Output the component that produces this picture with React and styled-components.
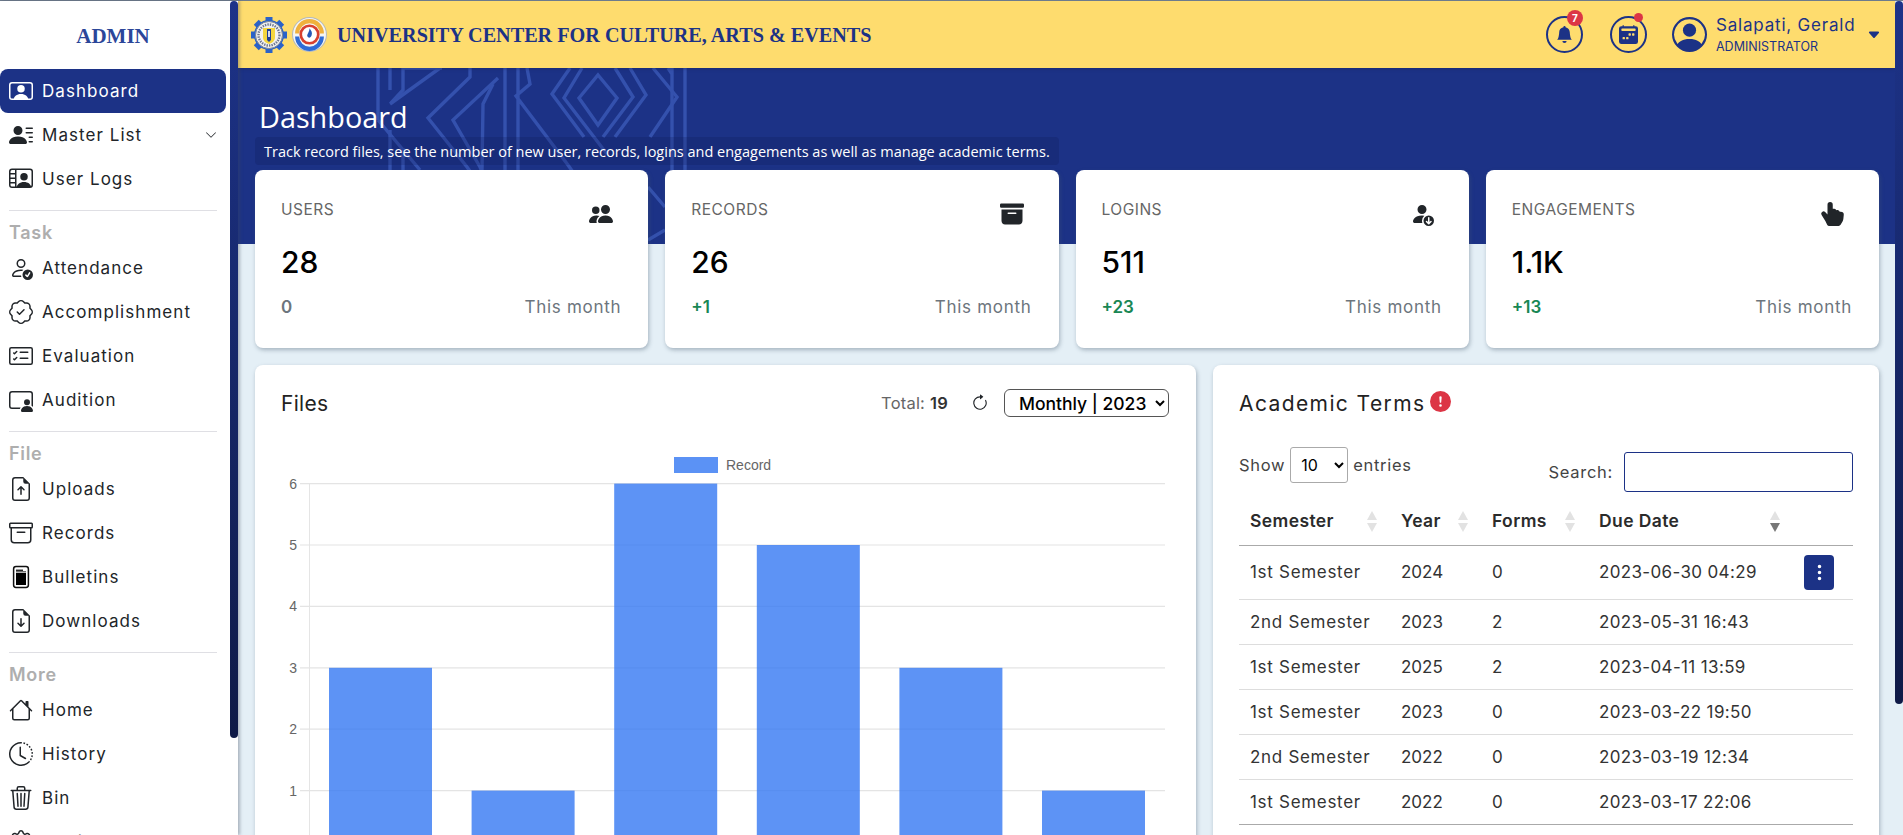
import React from 'react'
import styled, { createGlobalStyle } from 'styled-components'
import {
  BsPersonVideo, BsPersonLinesFill, BsPersonVideo2, BsPersonCheck, BsPatchCheck, BsCardChecklist,
  BsPersonVideo3, BsFileEarmarkArrowUp, BsArchive, BsFileEarmarkArrowDown, BsHouse, BsClockHistory,
  BsTrash3, BsGear, BsChevronDown, BsBellFill, BsCalendar2WeekFill, BsPersonCircle, BsCaretDownFill,
  BsPeopleFill, BsArchiveFill, BsPersonFillDown, BsHandIndexThumbFill, BsArrowClockwise,
  BsExclamationCircleFill, BsThreeDotsVertical
} from 'react-icons/bs'

const BLUE = '#1c3286'

const GlobalStyle = createGlobalStyle`
  * { box-sizing: border-box; }
  html, body { margin: 0; height: 100%; overflow: hidden; }
  body { font-family: Inter, "Noto Sans", sans-serif; color: #212529; }
`

const Shell = styled.div`
  display: flex;
  height: 100vh;
  border-top: 1px solid #6d7b8c;
`

// the page's scrollbars, drawn over the panels
const ScrollThumb = styled.div`
  position: absolute;
  top: 0;
  right: 0;
  z-index: 4;
  width: 8px;
  height: ${p => p.$h}px;
  border-radius: 5px;
  background: linear-gradient(180deg, #1d3389, #0f1a47);
`

const Sidebar = styled.aside`
  flex: 0 0 238px;
  overflow: hidden;
  padding-right: 12px;
  background: #fff;
  box-shadow: 2px 0 3px rgba(60, 70, 90, .35);
  position: relative;
  z-index: 3;
`

const Brand = styled.div`
  height: 68px;
  padding-top: 24px;
  text-align: center;
  font: 700 21px/23px "Liberation Serif", serif;
  color: #2b4699;
`

const NavItem = styled.div`
  display: flex;
  align-items: center;
  height: 44px;
  padding: 0 9px;
  gap: 9px;
  border-radius: 8px;
  font-size: 17px;
  letter-spacing: 1.05px;
  color: ${p => (p.$active ? '#fff' : '#212529')};
  background: ${p => (p.$active ? BLUE : 'transparent')};
  svg { flex: none; }
`

const NavIcon = styled.span`
  display: flex;
  width: 24px;
  height: 24px;
  font-size: 24px;
`

const NavArrow = styled.span`
  margin-left: auto;
  display: flex;
  font-size: 12px;
`

const Divider = styled.hr`
  border: 0;
  border-top: 1px solid #dfdfe4;
  margin: 9px 9px 0;
  width: 208px;
`

const NavGroup = styled.div`
  height: 28px;
  padding: 12px 9px 0;
  margin-bottom: 7px;
  font-size: 18px;
  letter-spacing: .7px;
  line-height: 20px;
  font-weight: 600;
  color: #aeaeae;
`

const Main = styled.main`
  position: relative;
  flex: 1;
  min-width: 0;
  overflow: hidden;
  padding-right: 8px;
  background: #e4eff6;
`

const Topbar = styled.header`
  position: relative;
  z-index: 2;
  display: flex;
  align-items: center;
  height: 67px;
  padding: 0 14px 0 13px;
  background: #fedc6e;
  box-shadow: 0 1px 3px rgba(20, 30, 80, .35);
`

const Logos = styled.div`
  display: flex;
  align-items: center;
  gap: 5px;
  margin-right: 10px;
`

const SiteTitle = styled.div`
  padding-top: 1px;
  font: 700 20.2px "Liberation Serif", serif;
  color: ${BLUE};
`

const TopActions = styled.div`
  margin-left: auto;
  display: flex;
  align-items: center;
`

const RoundIcon = styled.div`
  position: relative;
  width: 37px;
  height: 37px;
  margin-right: ${p => p.$gap}px;
  border: 2px solid ${BLUE};
  border-radius: 50%;
  color: ${BLUE};
  display: flex;
  align-items: center;
  justify-content: center;
  font-size: ${p => p.$size}px;
`

const Badge = styled.span`
  position: absolute;
  top: -8px;
  right: -2px;
  width: 16px;
  height: 16px;
  border-radius: 50%;
  background: #dc3545;
  color: #fff;
  font-size: 10px;
  line-height: 16px;
  font-weight: 700;
  text-align: center;
`

const Dot = styled.span`
  position: absolute;
  top: -5px;
  right: 2px;
  width: 9px;
  height: 9px;
  border-radius: 50%;
  background: #dc3545;
`

const Profile = styled.div`
  display: flex;
  align-items: center;
  color: ${BLUE};
`

const ProfileText = styled.div`
  margin: 0 10px 0 9px;
  width: 141px;
`

const ProfileName = styled.div`
  font-size: 17px;
  letter-spacing: .8px;
  line-height: 20px;
  margin-bottom: 4px;
  white-space: nowrap;
`

const ProfileRole = styled.div`
  font-size: 12.5px;
  line-height: 16px;
`

const Content = styled.div`
  position: relative;
  padding: 0 16px 17px 17px;
  background: linear-gradient(#1c3286 176px, transparent 176px);
`

const Pattern = styled.svg`
  position: absolute;
  left: 132px;
  top: -8px;
  width: 330px;
  height: 190px;
  pointer-events: none;
`

const Hero = styled.div`
  position: relative;
  height: 102px;
  padding-top: 30px;
  color: #fff;
`

const HeroTitle = styled.h1`
  margin: 0 0 1px 4px;
  font: 400 28.8px/38px "Open Sans", sans-serif;
`

const HeroNote = styled.div`
  display: inline-block;
  height: 28px;
  padding: 0 9px;
  border-radius: 4px;
  background: rgba(15, 25, 80, .22);
  font: 400 14.5px/29px "Open Sans", sans-serif;
  white-space: nowrap;
`

const Stats = styled.div`
  position: relative;
  display: grid;
  grid-template-columns: repeat(4, 1fr);
  gap: 17px;
`

const Card = styled.section`
  background: #fff;
  border-radius: 8px;
  box-shadow: 1px 2px 4px rgba(70, 90, 110, .4);
`

const StatCard = styled(Card)`
  height: 178px;
  padding: 30px 27px 0 26px;
`

const StatHead = styled.div`
  display: flex;
  justify-content: space-between;
  align-items: flex-start;
  height: 42px;
`

const StatLabel = styled.div`
  font-size: 15.5px;
  letter-spacing: .5px;
  line-height: 20px;
  color: #666;
`

const StatIcon = styled.span`
  display: flex;
  margin: 2px 8px 0 0;
  font-size: 24px;
  color: #212529;
`

const StatValue = styled.div`
  font-size: 30px;
  line-height: 40px;
  font-weight: 500;
  color: #000;
`

const StatFoot = styled.div`
  display: flex;
  justify-content: space-between;
  align-items: center;
  margin-top: 13px;
  font-size: 17px;
  letter-spacing: .7px;
  line-height: 24px;
  color: #6c757d;
`

const Delta = styled.span`
  font-weight: 600;
  letter-spacing: 0;
  color: ${p => (p.$up ? '#198754' : '#6c757d')};
`

const Row = styled.div`
  position: relative;
  display: grid;
  grid-template-columns: 941px 666px;
  gap: 17px;
  margin-top: 17px;
`

const FilesCard = styled(Card)`
  height: 608px;
  padding: 24px 27px 0 26px;
`

const CardHead = styled.div`
  display: flex;
  align-items: center;
  height: 28px;
`

const CardTitle = styled.h2`
  margin: 0;
  font-size: 21px;
  font-weight: 400;
  letter-spacing: ${p => p.$spacing || 0.3}px;
  color: #222;
`

const HeadTools = styled.div`
  margin-left: auto;
  display: flex;
  align-items: center;
  font-size: 16.5px;
  letter-spacing: .2px;
  color: #666;
  b { font-weight: 600; color: #333; margin-left: 5px; }
  svg { margin: 0 15px 0 23px; color: #212529; }
`

const PeriodSelect = styled.select`
  width: 165px;
  height: 28px;
  padding: 0 2px 0 10px;
  border: 1px solid #555;
  border-radius: 6px;
  background: #fff;
  color: #000;
  font: 500 17.5px Inter, sans-serif;
`

const Chart = styled.svg`
  display: block;
  margin: 25px 0 0 -26px;
  width: 941px;
  height: 520px;
  font-family: "Liberation Sans", sans-serif;
`

const TermsCard = styled(Card)`
  height: 608px;
  padding: 24px 26px 0 26px;
`

const AlertIcon = styled.span`
  display: flex;
  margin: -4px 0 0 5px;
  color: #dc3545;
  font-size: 21px;
`

const TableTools = styled.div`
  display: flex;
  justify-content: space-between;
  margin-top: 30px;
  height: 50px;
  font-size: 16.5px;
  letter-spacing: .7px;
  color: #444;
`

const ShowBox = styled.label`
  display: flex;
  align-items: center;
  align-self: flex-start;
  gap: 5px;
  height: 36px;
`

const PageSize = styled.select`
  width: 58px;
  height: 36px;
  padding-left: 6px;
  border: 1px solid #aaa;
  border-radius: 3px;
  background: #fff;
  font: 16px Inter, sans-serif;
`

const SearchBox = styled.label`
  display: flex;
  align-items: flex-start;
  gap: 11px;
  line-height: 40px;
  margin-top: 5px;
`

const SearchInput = styled.input`
  width: 229px;
  height: 40px;
  border: 1px solid ${BLUE};
  border-radius: 3px;
  outline: none;
`

const Table = styled.table`
  width: 614px;
  table-layout: fixed;
  border-collapse: collapse;
  font-size: 17px;
  color: #333;
`

const Th = styled.th`
  position: relative;
  height: 48px;
  width: ${p => p.$w}px;
  padding: 0 11px;
  text-align: left;
  font-size: 17.5px;
  letter-spacing: .4px;
  font-weight: 600;
  color: #2b2b2b;
  white-space: nowrap;
  border-bottom: 1px solid #aaa;
`

const SortMark = styled.span`
  position: absolute;
  right: ${p => p.$right}px;
  top: 14px;
  width: 10px;
  height: 21px;
  &::before, &::after {
    content: '';
    position: absolute;
    left: 0;
    border-left: 5px solid transparent;
    border-right: 5px solid transparent;
  }
  &::before { top: 0; border-bottom: 9px solid #e2e2e2; }
  &::after { bottom: 0; border-top: 9px solid ${p => (p.$on ? '#777' : '#e2e2e2')}; }
`

const Td = styled.td`
  height: ${p => (p.$tall ? 54 : 45)}px;
  padding: 0 11px;
  white-space: nowrap;
  letter-spacing: ${p => p.$spacing || 0}px;
  border-bottom: 1px solid ${p => (p.$last ? '#aaa' : '#ddd')};
`

const MenuButton = styled.button`
  display: flex;
  align-items: center;
  justify-content: center;
  width: 30px;
  height: 35px;
  margin-left: 0;
  padding: 0;
  border: 0;
  border-radius: 4px;
  background: ${BLUE};
  color: #fff;
  font-size: 19px;
`

const BulletinIcon = () => (
  <svg width="24" height="24" viewBox="0 0 24 24">
    <rect x="4.6" y="1.6" width="14.8" height="20.8" rx="2.4" fill="none" stroke="#111" strokeWidth="1.5" />
    <rect x="7" y="8" width="10" height="12" fill="#000" />
    <rect x="7" y="4.6" width="7" height="1.3" fill="#111" />
    <rect x="7" y="6.4" width="10" height=".9" fill="#111" />
  </svg>
)

const Gear = ({ color, teeth, r, w, h }) => (
  <g fill={color}>
    {Array.from({ length: teeth }).map((_, i) => (
      <rect key={i} x={18 - w / 2} y={18 - r - h} width={w} height={h + 2} transform={`rotate(${(360 / teeth) * i} 18 18)`} />
    ))}
    <circle cx="18" cy="18" r={r} />
  </g>
)

const SealOne = () => (
  <svg width="36" height="36" viewBox="0 0 36 36">
    <Gear color="#2a62c8" teeth={8} r={15} w={7} h={3} />
    <circle cx="18" cy="18" r="13.5" fill="#f2f2f0" stroke="#7f8796" strokeWidth="1" />
    <circle cx="18" cy="18" r="10.5" fill="none" stroke="#6d7690" strokeWidth="2.4" strokeDasharray="1.4 1.1" />
    <path d="M12 11h12v9c0 4-3 6-6 7-3-1-6-3-6-7z" fill="#f4d63e" />
    <path d="M16 12h4v11l-2 2-2-2z" fill="#1f3f96" />
    <rect x="17.2" y="14" width="1.6" height="6" fill="#fff" />
  </svg>
)

const SealTwo = () => (
  <svg width="35" height="35" viewBox="0 0 34 34">
    <circle cx="17" cy="17" r="16.5" fill="#f5f5f2" stroke="#b4b8b8" />
    <path d="M3 16a14 14 0 0 1 28 0h-4a10 10 0 0 0-20 0z" fill="#f0b13c" />
    <path d="M3 19a14 14 0 0 0 28 0h-4a10 10 0 0 1-20 0z" fill="#2f6bd6" />
    <circle cx="17" cy="17" r="8.5" fill="#fff" stroke="#d8402f" strokeWidth="2.6" />
    <path d="M17 11c2 3 3 4 2 7-.5 2-3 3-4 1-1-2 2-4 2-8z" fill="#2458b8" />
  </svg>
)

const navGroups = [
  { items: [
    { label: 'Dashboard', icon: <BsPersonVideo />, active: true },
    { label: 'Master List', icon: <BsPersonLinesFill />, arrow: true },
    { label: 'User Logs', icon: <BsPersonVideo2 /> }
  ] },
  { title: 'Task', items: [
    { label: 'Attendance', icon: <BsPersonCheck /> },
    { label: 'Accomplishment', icon: <BsPatchCheck /> },
    { label: 'Evaluation', icon: <BsCardChecklist /> },
    { label: 'Audition', icon: <BsPersonVideo3 /> }
  ] },
  { title: 'File', items: [
    { label: 'Uploads', icon: <BsFileEarmarkArrowUp /> },
    { label: 'Records', icon: <BsArchive /> },
    { label: 'Bulletins', icon: <BulletinIcon /> },
    { label: 'Downloads', icon: <BsFileEarmarkArrowDown /> }
  ] },
  { title: 'More', items: [
    { label: 'Home', icon: <BsHouse /> },
    { label: 'History', icon: <BsClockHistory /> },
    { label: 'Bin', icon: <BsTrash3 /> },
    { label: 'Settings', icon: <BsGear /> }
  ] }
]

const stats = [
  { label: 'USERS', value: '28', delta: '0', icon: <BsPeopleFill /> },
  { label: 'RECORDS', value: '26', delta: '+1', up: true, icon: <BsArchiveFill /> },
  { label: 'LOGINS', value: '511', delta: '+23', up: true, icon: <BsPersonFillDown /> },
  { label: 'ENGAGEMENTS', value: '1.1K', delta: '+13', up: true, icon: <BsHandIndexThumbFill /> }
]

const terms = [
  ['1st Semester', '2024', '0', '2023-06-30 04:29'],
  ['2nd Semester', '2023', '2', '2023-05-31 16:43'],
  ['1st Semester', '2025', '2', '2023-04-11 13:59'],
  ['1st Semester', '2023', '0', '2023-03-22 19:50'],
  ['2nd Semester', '2022', '0', '2023-03-19 12:34'],
  ['1st Semester', '2022', '0', '2023-03-17 22:06']
]
const cellSpacing = [0.7, 0, 0, 0.35]

const bars = [3, 1, 6, 5, 3, 1]
const months = ['Jan', 'Feb', 'Mar', 'Apr', 'May', 'Jun']
// y of the zero line and height of one unit, inside the chart svg
const zeroY = 410
const unit = 61.4

const patternLines = [
  'M228 15 247 38 228 65 209 38Z',
  'M212 8 194 38 237 94',
  'M200 8 182 34 214 77',
  'M245 8 263 37 233 77',
  'M260 8 276 35 245 77',
  'M283 8 307 37 280 77',
  'M298 8 302 14 M302 0V110 M315 0V110',
  'M135 0V110M148 0V110 M157 8 160 24 146 36 198 105 214 128',
  'M100 8V17L58 58 97 107 110 125',
  'M128 18 83 60 110 107 120 130',
  'M123 24 113 44 112 110',
  'M72 8 34 8 M33 8V30L21 43',
  'M70 8 20 44 M8 8V60 M20 8V30 M8 60 50 110',
  'M278 127 295 147 M278 180 295 170',
  'M20 70V110 M33 88V110'
]

export default function App() {
  return (
    <Shell>
      <GlobalStyle />
      <Sidebar>
        <ScrollThumb $h={737} />
        <Brand>ADMIN</Brand>
        {navGroups.map((group, i) => (
          <div key={i}>
            {i > 0 && <Divider />}
            {group.title && <NavGroup>{group.title}</NavGroup>}
            {group.items.map(item => (
              <NavItem key={item.label} $active={item.active}>
                <NavIcon>{item.icon}</NavIcon>
                {item.label}
                {item.arrow && <NavArrow><BsChevronDown /></NavArrow>}
              </NavItem>
            ))}
          </div>
        ))}
      </Sidebar>

      <Main>
        <ScrollThumb $h={703} />
        <Topbar>
          <Logos>
            <SealOne />
            <SealTwo />
          </Logos>
          <SiteTitle>UNIVERSITY CENTER FOR CULTURE, ARTS &amp; EVENTS</SiteTitle>
          <TopActions>
            <RoundIcon $gap={27} $size={17}><BsBellFill /><Badge>7</Badge></RoundIcon>
            <RoundIcon $gap={25} $size={19}><BsCalendar2WeekFill /><Dot /></RoundIcon>
            <Profile>
              <BsPersonCircle size={35} />
              <ProfileText>
                <ProfileName>Salapati, Gerald</ProfileName>
                <ProfileRole>ADMINISTRATOR</ProfileRole>
              </ProfileText>
              <BsCaretDownFill size={14} />
            </Profile>
          </TopActions>
        </Topbar>

        <Content>
          <Pattern viewBox="0 0 330 190">
            {patternLines.map((d, i) => (
              <path key={i} d={d} fill="none" stroke="#3451ad" strokeWidth="3.4" />
            ))}
          </Pattern>
          <Hero>
            <HeroTitle>Dashboard</HeroTitle>
            <HeroNote>Track record files, see the number of new user, records, logins and engagements as well as manage academic terms.</HeroNote>
          </Hero>

          <Stats>
            {stats.map(s => (
              <StatCard key={s.label}>
                <StatHead>
                  <StatLabel>{s.label}</StatLabel>
                  <StatIcon>{s.icon}</StatIcon>
                </StatHead>
                <StatValue>{s.value}</StatValue>
                <StatFoot>
                  <Delta $up={s.up}>{s.delta}</Delta>
                  <span>This month</span>
                </StatFoot>
              </StatCard>
            ))}
          </Stats>

          <Row>
            <FilesCard>
              <CardHead>
                <CardTitle>Files</CardTitle>
                <HeadTools>
                  Total: <b>19</b>
                  <BsArrowClockwise size={18} />
                  <PeriodSelect defaultValue="m23">
                    <option value="m23">Monthly | 2023</option>
                  </PeriodSelect>
                </HeadTools>
              </CardHead>
              <Chart viewBox="0 0 941 520">
                <rect x="419" y="15" width="44" height="16" fill="#5b92f5" />
                <text x="471" y="28" fontSize="14" fill="#666">Record</text>
                <line x1="54.5" x2="54.5" y1={zeroY - unit * 6} y2={zeroY} stroke="#e5e5e5" />
                {[0, 1, 2, 3, 4, 5, 6].map(n => (
                  <g key={n}>
                    <line x1="45" x2="910" y1={zeroY - unit * n} y2={zeroY - unit * n} stroke="#e4e4e4" strokeWidth="1.2" />
                    <text x="42" y={zeroY - unit * n + 5} fontSize="14" fill="#666" textAnchor="end">{n}</text>
                  </g>
                ))}
                {bars.map((v, i) => (
                  <rect key={i} x={74 + i * 142.6} y={zeroY - unit * v} width="103" height={unit * v} fill="rgba(52, 120, 243, .8)" />
                ))}
                {months.map((m, i) => (
                  <text key={m} x={125 + i * 142.6} y={zeroY + 20} fontSize="14" fill="#666" textAnchor="middle">{m}</text>
                ))}
              </Chart>
            </FilesCard>

            <TermsCard>
              <CardHead>
                <CardTitle $spacing={1.4}>Academic Terms</CardTitle>
                <AlertIcon><BsExclamationCircleFill /></AlertIcon>
              </CardHead>
              <TableTools>
                <ShowBox>
                  Show
                  <PageSize defaultValue="10">
                    <option value="10">10</option>
                  </PageSize>
                  entries
                </ShowBox>
                <SearchBox>
                  Search:
                  <SearchInput type="text" />
                </SearchBox>
              </TableTools>
              <Table>
                <thead>
                  <tr>
                    <Th $w={151}>Semester<SortMark $right={13} /></Th>
                    <Th $w={91}>Year<SortMark $right={13} /></Th>
                    <Th $w={107}>Forms<SortMark $right={13} /></Th>
                    <Th $w={205}>Due Date<SortMark $right={13} $on /></Th>
                    <Th $w={60} />
                  </tr>
                </thead>
                <tbody>
                  {terms.map((t, i) => (
                    <tr key={i}>
                      {t.map((cell, j) => (
                        <Td key={j} $tall={i === 0} $spacing={cellSpacing[j]} $last={i === terms.length - 1}>{cell}</Td>
                      ))}
                      <Td $last={i === terms.length - 1}>
                        {i === 0 && <MenuButton><BsThreeDotsVertical /></MenuButton>}
                      </Td>
                    </tr>
                  ))}
                </tbody>
              </Table>
            </TermsCard>
          </Row>
        </Content>
      </Main>
    </Shell>
  )
}
